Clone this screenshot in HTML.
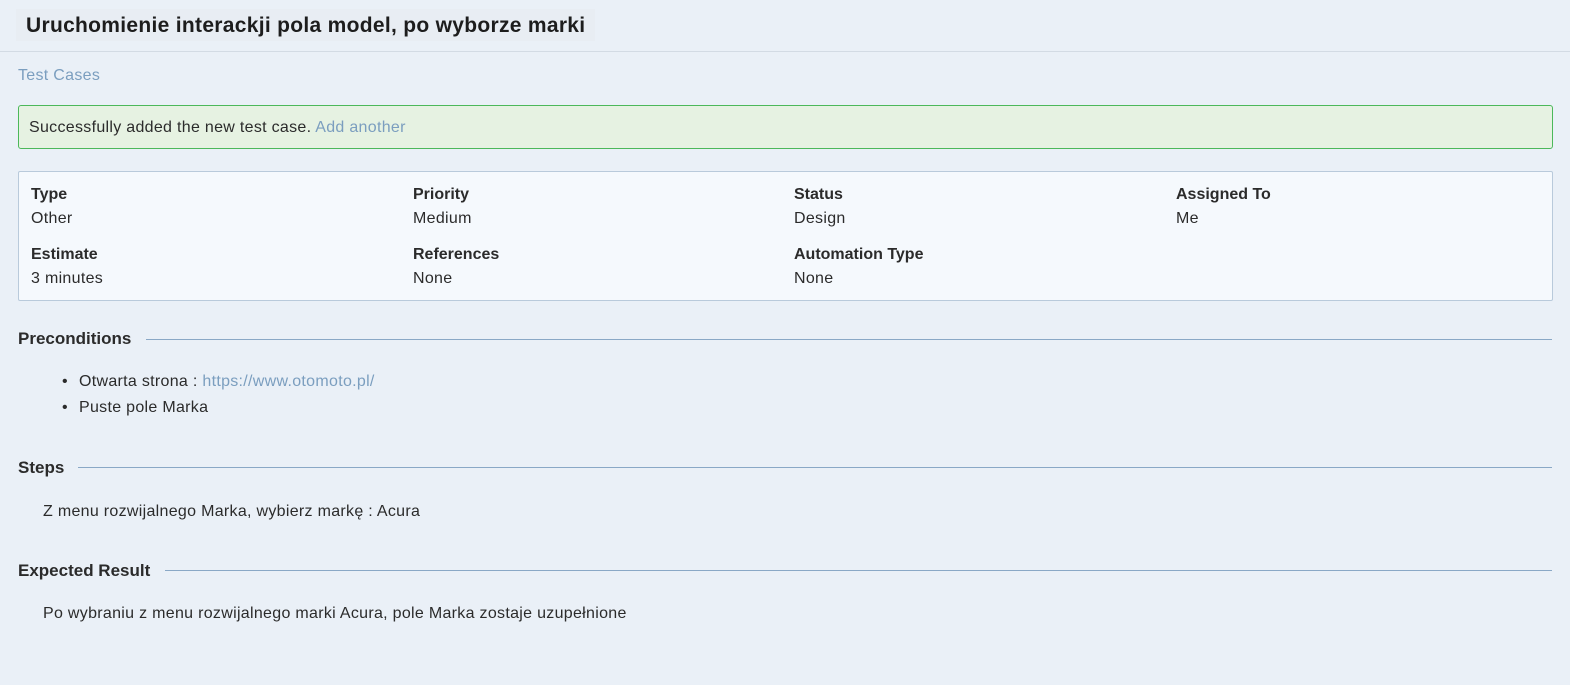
<!DOCTYPE html>
<html><head><meta charset="utf-8"><style>
body{margin:0;width:1570px;height:685px;background:#eaf0f7;font-family:"Liberation Sans",sans-serif;color:#2b2b2b;font-size:16px;letter-spacing:0.3px;overflow:hidden;position:relative}
.a{position:absolute;white-space:nowrap}
.title{left:16px;top:9px;height:32px;padding:0 10px;background:#e8edf3;font-size:21px;letter-spacing:0.3px;font-weight:bold;color:#1d1d1d;line-height:34px}
.hr{position:absolute;left:0;right:0;top:51px;height:1px;background:#d3dbe4}
.link{color:#7b9ebf}
.ok{left:18px;top:105px;width:1533px;height:42px;border:1px solid #4cb85a;border-radius:3px;background:#e6f2e2}
.box{left:18px;top:171px;width:1533px;height:128px;border:1px solid #b9cadb;border-radius:2px;background:#f5f9fd}
.b{font-weight:bold;letter-spacing:0}
.sec{font-weight:bold;font-size:17px;letter-spacing:0}
.line{position:absolute;height:1px;background:#8aa8c6;right:18px}
</style></head><body>
<div class="a title">Uruchomienie interackji pola model, po wyborze marki</div>
<div class="hr"></div>
<div class="a link" style="left:18px;top:67px">Test Cases</div>
<div class="a ok"></div>
<div class="a" style="left:29px;top:119px">Successfully added the new test case. <span class="link">Add another</span></div>
<div class="a box"></div>
<div class="a b" style="left:31px;top:186px">Type</div><div class="a" style="left:31px;top:210px">Other</div>
<div class="a b" style="left:413px;top:186px">Priority</div><div class="a" style="left:413px;top:210px">Medium</div>
<div class="a b" style="left:794px;top:186px">Status</div><div class="a" style="left:794px;top:210px">Design</div>
<div class="a b" style="left:1176px;top:186px">Assigned To</div><div class="a" style="left:1176px;top:210px">Me</div>
<div class="a b" style="left:31px;top:246px">Estimate</div><div class="a" style="left:31px;top:270px">3 minutes</div>
<div class="a b" style="left:413px;top:246px">References</div><div class="a" style="left:413px;top:270px">None</div>
<div class="a b" style="left:794px;top:246px">Automation Type</div><div class="a" style="left:794px;top:270px">None</div>
<div class="a sec" style="left:18px;top:329px">Preconditions</div><div class="line" style="left:146px;top:339px"></div>
<div class="a" style="left:62px;top:373px">•</div><div class="a" style="left:79px;top:373px">Otwarta strona : <span class="link">https://www.otomoto.pl/</span></div>
<div class="a" style="left:62px;top:399px">•</div><div class="a" style="left:79px;top:399px">Puste pole Marka</div>
<div class="a sec" style="left:18px;top:458px">Steps</div><div class="line" style="left:78px;top:467px"></div>
<div class="a" style="left:43px;top:503px">Z menu rozwijalnego Marka, wybierz markę : Acura</div>
<div class="a sec" style="left:18px;top:561px">Expected Result</div><div class="line" style="left:165px;top:570px"></div>
<div class="a" style="left:43px;top:605px">Po wybraniu z menu rozwijalnego marki Acura, pole Marka zostaje uzupełnione</div>
</body></html>
